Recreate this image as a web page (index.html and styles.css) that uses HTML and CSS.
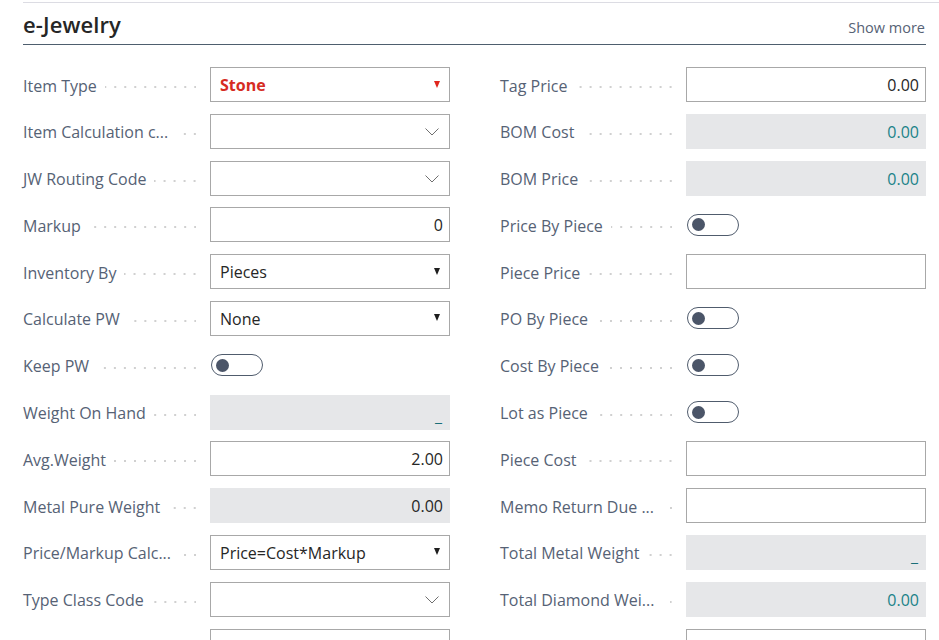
FILE: index.html
```html
<!DOCTYPE html>
<html lang="en">
<head>
<meta charset="utf-8">
<title>e-Jewelry</title>
<link rel="stylesheet" href="styles.css">
</head>
<body>
<div class="topline"></div>
<section class="section">
  <header class="head">
    <h2 class="title">e-Jewelry</h2>
    <a class="more">Show more</a>
  </header>
  <div class="fields">
    <div class="col">
      <div class="row"><div class="lab"><span class="txt">Item Type</span><span class="leader"></span></div><div class="box sel"><span class="val strong">Stone</span><span class="tri red"></span></div></div>
      <div class="row"><div class="lab"><span class="txt">Item Calculation c...</span><span class="leader"></span></div><div class="box sel"><span class="val"></span><svg class="chev" width="14" height="8" viewBox="0 0 14 8"><polyline points="0.5,0.5 7,7 13.5,0.5" fill="none" stroke="#6f6f6f" stroke-width="1"/></svg></div></div>
      <div class="row"><div class="lab"><span class="txt">JW Routing Code</span><span class="leader"></span></div><div class="box sel"><span class="val"></span><svg class="chev" width="14" height="8" viewBox="0 0 14 8"><polyline points="0.5,0.5 7,7 13.5,0.5" fill="none" stroke="#6f6f6f" stroke-width="1"/></svg></div></div>
      <div class="row"><div class="lab"><span class="txt">Markup</span><span class="leader"></span></div><div class="box num"><span class="val">0</span></div></div>
      <div class="row"><div class="lab"><span class="txt">Inventory By</span><span class="leader"></span></div><div class="box sel"><span class="val">Pieces</span><span class="tri"></span></div></div>
      <div class="row"><div class="lab"><span class="txt">Calculate PW</span><span class="leader"></span></div><div class="box sel"><span class="val">None</span><span class="tri"></span></div></div>
      <div class="row"><div class="lab"><span class="txt">Keep PW</span><span class="leader"></span></div><div class="tog"><span class="knob"></span></div></div>
      <div class="row"><div class="lab"><span class="txt">Weight On Hand</span><span class="leader"></span></div><div class="box ro num"><span class="val dash">_</span></div></div>
      <div class="row"><div class="lab"><span class="txt">Avg.Weight</span><span class="leader"></span></div><div class="box num"><span class="val">2.00</span></div></div>
      <div class="row"><div class="lab"><span class="txt">Metal Pure Weight</span><span class="leader"></span></div><div class="box ro num"><span class="val">0.00</span></div></div>
      <div class="row"><div class="lab"><span class="txt">Price/Markup Calc...</span><span class="leader"></span></div><div class="box sel"><span class="val">Price=Cost*Markup</span><span class="tri"></span></div></div>
      <div class="row"><div class="lab"><span class="txt">Type Class Code</span><span class="leader"></span></div><div class="box sel"><span class="val"></span><svg class="chev" width="14" height="8" viewBox="0 0 14 8"><polyline points="0.5,0.5 7,7 13.5,0.5" fill="none" stroke="#6f6f6f" stroke-width="1"/></svg></div></div>
      <div class="row"><div class="lab"></div><div class="box"><span class="val"></span></div></div>
    </div>
    <div class="col">
      <div class="row"><div class="lab"><span class="txt">Tag Price</span><span class="leader"></span></div><div class="box num"><span class="val">0.00</span></div></div>
      <div class="row"><div class="lab"><span class="txt">BOM Cost</span><span class="leader"></span></div><div class="box ro num"><span class="val teal">0.00</span></div></div>
      <div class="row"><div class="lab"><span class="txt">BOM Price</span><span class="leader"></span></div><div class="box ro num"><span class="val teal">0.00</span></div></div>
      <div class="row"><div class="lab"><span class="txt">Price By Piece</span><span class="leader"></span></div><div class="tog"><span class="knob"></span></div></div>
      <div class="row"><div class="lab"><span class="txt">Piece Price</span><span class="leader"></span></div><div class="box num"><span class="val"></span></div></div>
      <div class="row"><div class="lab"><span class="txt">PO By Piece</span><span class="leader"></span></div><div class="tog"><span class="knob"></span></div></div>
      <div class="row"><div class="lab"><span class="txt">Cost By Piece</span><span class="leader"></span></div><div class="tog"><span class="knob"></span></div></div>
      <div class="row"><div class="lab"><span class="txt">Lot as Piece</span><span class="leader"></span></div><div class="tog"><span class="knob"></span></div></div>
      <div class="row"><div class="lab"><span class="txt">Piece Cost</span><span class="leader"></span></div><div class="box num"><span class="val"></span></div></div>
      <div class="row"><div class="lab"><span class="txt">Memo Return Due ...</span><span class="leader"></span></div><div class="box num"><span class="val"></span></div></div>
      <div class="row"><div class="lab"><span class="txt">Total Metal Weight</span><span class="leader"></span></div><div class="box ro num"><span class="val dash">_</span></div></div>
      <div class="row"><div class="lab"><span class="txt">Total Diamond Wei...</span><span class="leader"></span></div><div class="box ro num"><span class="val teal">0.00</span></div></div>
      <div class="row"><div class="lab"></div><div class="box"><span class="val"></span></div></div>
    </div>
  </div>
</section>
</body>
</html>
```
FILE: styles.css
```css
html, body {
  margin: 0;
  padding: 0;
  background: #ffffff;
}
body {
  font-family: "Open Sans", "Noto Sans", sans-serif;
  color: #566275;
  overflow: hidden;
}
.topline {
  margin: 2px 0 0 23px;
  border-top: 1px solid #dcdce3;
}
.section {
  width: 903px;
  margin-left: 23px;
}
.head {
  height: 41px;
  border-bottom: 1px solid #4e5e6e;
  display: flex;
  align-items: center;
  justify-content: space-between;
}
.title {
  margin: 0;
  font-size: 22px;
  font-weight: 600;
  color: #262626;
  letter-spacing: 0.1px;
}
.more {
  font-size: 14.5px;
  color: #566275;
  margin-top: 8px;
  margin-right: 1px;
}
.fields {
  display: grid;
  grid-template-columns: 427px 426px;
  column-gap: 50px;
  margin-top: 22px;
}
.col {
  display: flex;
  flex-direction: column;
  gap: 11.8px;
}
.row {
  display: grid;
  grid-template-columns: 1fr 240px;
  height: 35px;
  align-items: center;
}
.lab {
  display: flex;
  align-items: center;
  min-width: 0;
  font-size: 16px;
  white-space: nowrap;
  padding-top: 2px;
}
.txt {
  flex: none;
}
.leader {
  flex: 1;
  height: 2px;
  margin: 3px 14px 0 8px;
  background-image: linear-gradient(to right, transparent 8px, #d0d0d0 8px);
  background-size: 10px 2px;
  background-repeat: repeat-x;
  background-position: right top;
}
.box {
  height: 35px;
  box-sizing: border-box;
  border: 1px solid #a8a8a8;
  background: #fff;
  display: flex;
  align-items: center;
  padding: 1px 9px 0 9px;
  font-size: 16px;
  color: #262626;
}
.box.num {
  justify-content: flex-end;
  padding-right: 6px;
}
.box.ro {
  border-color: transparent;
  background: #e6e7e9;
}
.val {
  flex: 1;
  white-space: nowrap;
}
.num .val {
  text-align: right;
}
.val.strong {
  color: #d62b22;
  font-weight: 700;
}
.val.teal {
  color: #1a8288;
}
.val.dash {
  color: #1a6f78;
  align-self: flex-end;
  margin-bottom: 2px;
  padding-right: 1px;
}
.tri {
  width: 0;
  height: 0;
  border-left: 3.5px solid transparent;
  border-right: 3.5px solid transparent;
  border-top: 7px solid #1e1e1e;
  margin-top: -2px;
}
.tri.red {
  border-top-color: #e0261d;
}
.chev {
  margin-right: 1px;
  margin-top: 1px;
}
.tog {
  width: 52px;
  height: 22px;
  box-sizing: border-box;
  border: 1px solid #505c6d;
  border-radius: 11px;
  display: flex;
  align-items: center;
  padding-left: 4px;
  margin-left: 1px;
}
.knob {
  width: 13px;
  height: 13px;
  border-radius: 50%;
  background: #4b5568;
}
```
